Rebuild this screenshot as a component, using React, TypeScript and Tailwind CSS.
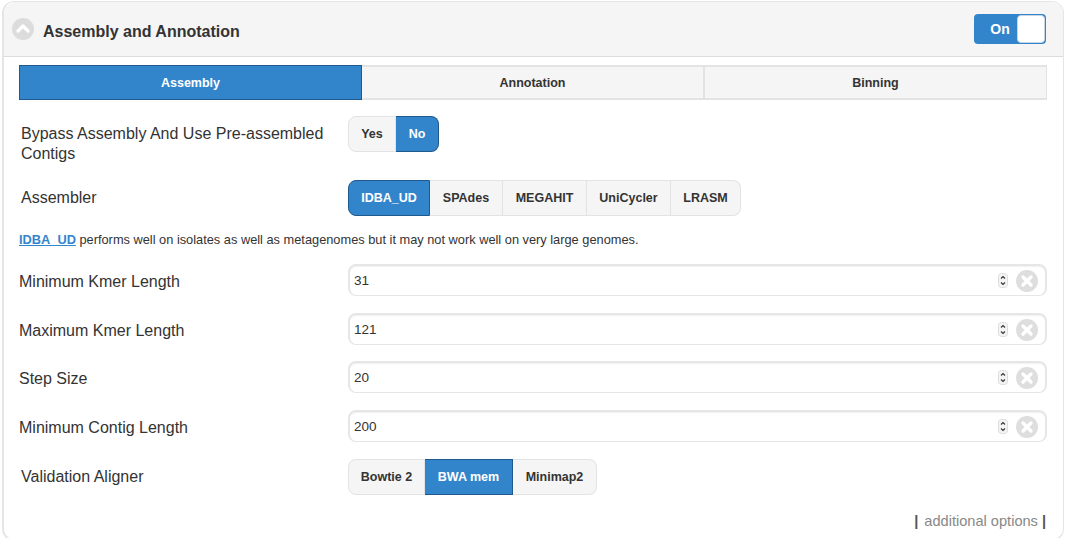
function Seg({ items, active }: { items: [string, number][]; active: number }) {
  return (
    <div className="flex h-9 text-[12.5px] font-bold">
      {items.map(([t, w], i) => {
        const first = i === 0;
        const last = i === items.length - 1;
        const on = i === active;
        return (
          <button
            key={t}
            style={{ width: w }}
            className={
              "flex items-center justify-center border-y border-r " +
              (first ? "border-l rounded-l-lg " : "") +
              (last ? "rounded-r-lg " : "") +
              (on
                ? "bg-[#3385cb] border-[#1f5a8e] text-white"
                : "bg-[#f5f5f5] border-[#e3e3e3] text-[#333]")
            }
          >
            {t}
          </button>
        );
      })}
    </div>
  );
}

function NumRow({ label, value, mt }: { label: string; value: string; mt: string }) {
  return (
    <div className={"flex items-center h-8 " + mt}>
      <div className="w-[329px] pt-[3px] text-base text-[#333]">{label}</div>
      <div className="flex h-8 flex-1 items-center rounded-lg border-2 border-b border-r-2 border-[#e6e6e6] bg-white pl-[4px] pr-[7px] text-[13.5px] text-[#333] shadow-[inset_0_1px_1px_rgba(0,0,0,0.06)]">
        <span className="flex-1 pt-[2px]">{value}</span>
        <svg width="10" height="15" viewBox="0 0 10 15" className="mr-[8px]">
          <rect x="0.5" y="0.5" width="9" height="14" rx="3" fill="#f4f4f4" stroke="#ddd" />
          <path d="M3 5.5 5 3.5 7 5.5M3 9.5 5 11.5 7 9.5" fill="none" stroke="#333" strokeWidth="1.1" />
        </svg>
        <svg width="22" height="22" viewBox="0 0 22 22">
          <circle cx="11" cy="11" r="11" fill="#dedede" />
          <path d="M7 7 15 15M15 7 7 15" stroke="#fff" strokeWidth="3.4" strokeLinecap="round" />
        </svg>
      </div>
    </div>
  );
}

export default function App() {
  return (
    <div className="h-[538px] w-[1067px] overflow-hidden bg-white font-['Liberation_Sans',Arial,sans-serif]">
      <div className="ml-[2px] mt-px h-[540px] w-[1062px] rounded-xl border-2 border-r border-t border-[#e5e5e5] bg-white">
        <div className="flex h-[55px] items-center rounded-t-xl border-b border-[#dcdcdc] bg-[#f5f5f5] pl-[8px] pr-[17px]">
          <svg width="22" height="22" viewBox="0 0 22 22">
            <circle cx="11" cy="11" r="11" fill="#dcdcdc" />
            <path d="M6 13 11 8 16 13" fill="none" stroke="#fff" strokeWidth="3.2" strokeLinecap="round" strokeLinejoin="round" />
          </svg>
          <div className="ml-[9px] flex-1 pt-[5px] text-base font-bold text-[#333]">Assembly and Annotation</div>
          <div className="flex h-[30px] w-[72px] items-center rounded bg-[#3385cb] p-px">
            <span className="flex-1 pl-2 text-center text-sm font-bold text-white">On</span>
            <span className="h-7 w-7 rounded border border-[#c9d6e2] bg-white" />
          </div>
        </div>

        <div className="pl-[15px] pr-[16px]">
          <div className="mt-2 flex h-[35px] text-[12.5px] font-bold">
            <div className="flex w-[343px] items-center justify-center border border-[#1f5a8e] bg-[#3385cb] pt-[2px] text-white">Assembly</div>
            <div className="flex w-[343px] items-center justify-center border-y-2 border-r-2 border-[#e3e3e3] bg-[#f5f5f5] pt-[2px] text-[#333]">Annotation</div>
            <div className="flex flex-1 items-center justify-center border-y-2 border-r border-[#e3e3e3] bg-[#f5f5f5] pt-[2px] text-[#333]">Binning</div>
          </div>

          <div className="mt-4 flex items-start">
            <div className="w-[329px] pl-[2px] pt-[8px] text-base leading-5 text-[#333]">
              Bypass Assembly And Use Pre-assembled Contigs
            </div>
            <Seg items={[["Yes", 48], ["No", 43]]} active={1} />
          </div>

          <div className="mt-4 flex items-center">
            <div className="w-[329px] pl-[2px] text-base text-[#333]">Assembler</div>
            <Seg items={[["IDBA_UD", 82], ["SPAdes", 73], ["MEGAHIT", 84], ["UniCycler", 84], ["LRASM", 70]]} active={0} />
          </div>

          <div className="mt-4 text-[12.8px] leading-[16px] text-[#333]">
            <span className="font-bold text-[#3385cb] underline">IDBA_UD</span> performs well on isolates as well as metagenomes but it may not work well on very large genomes.
          </div>

          <NumRow label="Minimum Kmer Length" value="31" mt="mt-4" />
          <NumRow label="Maximum Kmer Length" value="121" mt="mt-[17px]" />
          <NumRow label="Step Size" value="20" mt="mt-4" />
          <NumRow label="Minimum Contig Length" value="200" mt="mt-[17px]" />

          <div className="mt-[17px] flex items-center">
            <div className="w-[329px] pl-[2px] text-base text-[#333]">Validation Aligner</div>
            <Seg items={[["Bowtie 2", 77], ["BWA mem", 88], ["Minimap2", 84]]} active={1} />
          </div>

          <div className="mt-[18px] flex justify-end pr-[1px] text-[14.6px] leading-4 text-[#888]">
            <span className="font-bold text-[#555]">|</span>
            <span className="ml-[6px] mr-[4px]">additional options</span>
            <span className="font-bold text-[#555]">|</span>
          </div>
        </div>
      </div>
    </div>
  );
}
